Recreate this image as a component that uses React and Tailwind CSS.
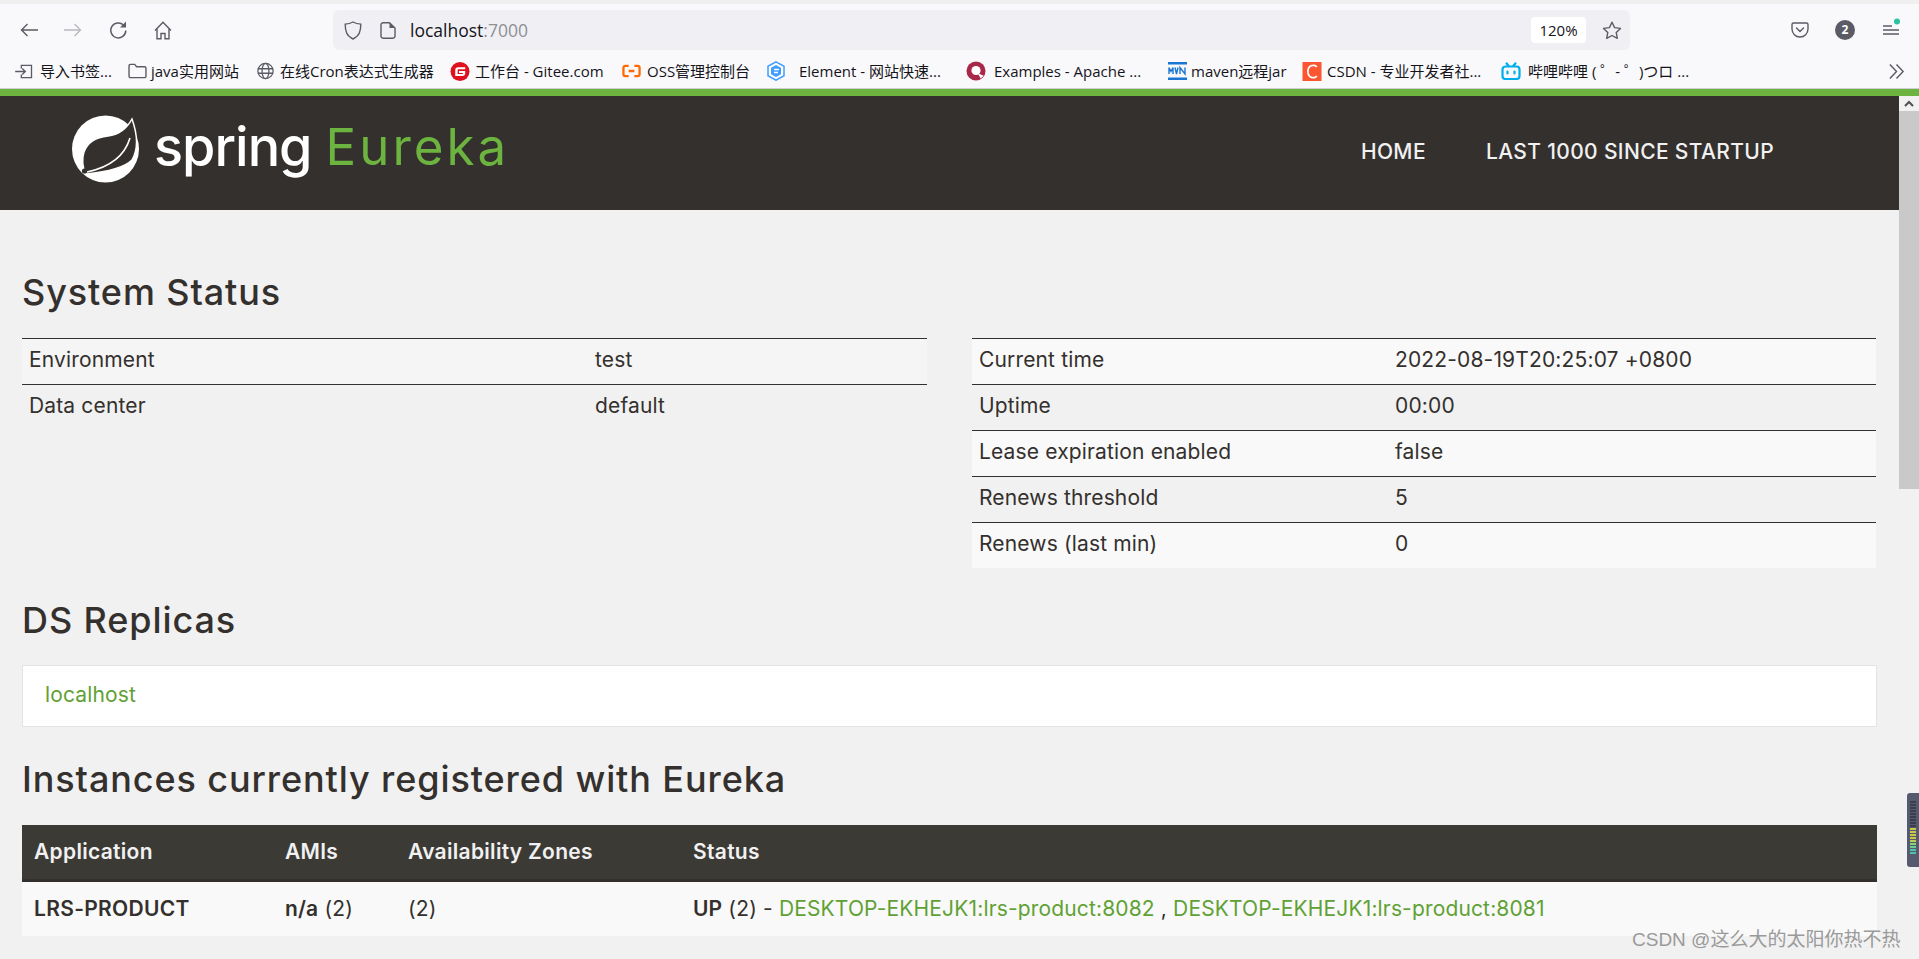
import React from 'react';

const ui = { fontFamily: '"Open Sans","Noto Sans CJK SC",sans-serif' };
const body = { fontFamily: '"Inter","Noto Sans",sans-serif' };

const Back = () => (
  <svg width="18" height="14" viewBox="0 0 18 14" fill="none" stroke="#5b5b66" strokeWidth="1.4"><path d="M18 7H1.500M7.500 1 1.500 7l6 6" /></svg>
);
const Forward = () => (
  <svg width="18" height="14" viewBox="0 0 18 14" fill="none" stroke="#b9b9bf" strokeWidth="1.4"><path d="M0 7h16.500M10.500 1l6 6-6 6" /></svg>
);
const Reload = () => (
  <svg width="18" height="18" viewBox="0 0 18 18" fill="none" stroke="#5b5b66" strokeWidth="1.5"><path d="M14.500 4A7.500 7.500 0 1 0 16.800 9.500" /><path d="M17 0.500v6h-6z" fill="#5b5b66" stroke="none" /></svg>
);
const Home = () => (
  <svg width="18" height="19" viewBox="0 0 18 19" fill="none" stroke="#5b5b66" strokeWidth="1.4"><path d="M1 9.500 9 1.200l8 8.300M3 8v9.800h4v-5.300h4v5.300h4V8" /></svg>
);
const Shield = () => (
  <svg width="18" height="19" viewBox="0 0 18 19" fill="none" stroke="#5b5b66" strokeWidth="1.4"><path d="M9 1c2.600 1.500 5 2 7.800 2.100 0 7-1.300 11.900-7.800 14.900C2.500 15 1.200 10.100 1.200 3.100 4 3 6.400 2.500 9 1z" /></svg>
);
const Doc = () => (
  <svg width="16" height="17" viewBox="0 0 16 17" fill="none" stroke="#5b5b66" strokeWidth="1.4"><path d="M3 .8h6.500L15 6v8.200a2 2 0 0 1-2 2H3a2 2 0 0 1-2-2V2.800a2 2 0 0 1 2-2z" /><path d="M9.500 .8V6H15z" fill="#5b5b66" stroke="none" /></svg>
);
const Star = () => (
  <svg width="20" height="19" viewBox="0 0 20 19" fill="none" stroke="#5b5b66" strokeWidth="1.4" strokeLinejoin="round"><path d="m10 1.200 2.600 5.400 5.900.8-4.300 4 1.100 5.900L10 14.500 4.700 17.300l1.100-5.900-4.300-4 5.900-.8z" /></svg>
);
const Pocket = () => (
  <svg width="18" height="16" viewBox="0 0 18 16" fill="none" stroke="#5b5b66" strokeWidth="1.4"><path d="M2.500 1h13A1.500 1.500 0 0 1 17 2.500V7A8 8 0 0 1 1 7V2.500A1.500 1.500 0 0 1 2.500 1z" /><path d="m5.500 6 3.500 3.500L12.500 6" strokeLinecap="round" /></svg>
);
const Menu = () => (
  <svg width="20" height="20" viewBox="0 0 20 20" fill="none" stroke="#5b5b66" strokeWidth="1.3"><path d="M1 8h9M1 12h16M1 16h16" /><circle cx="15" cy="3.500" r="3" fill="#2ac3a2" stroke="none" /></svg>
);
const Chevrons = () => (
  <svg width="17" height="17" viewBox="0 0 18 18" fill="none" stroke="#5b5b66" strokeWidth="1.500"><path d="m2 1.500 7 7.500-7 7.500M9 1.500l7 7.500-7 7.500" /></svg>
);

const IconImport = () => (
  <svg width="18" height="15" viewBox="0 0 20 17" fill="none" stroke="#5b5b66" strokeWidth="1.500"><path d="M7 5V1.500h11.500v14H7V12M0 8.500h11M8 5l3.500 3.500L8 12" /></svg>
);
const IconFolder = () => (
  <svg width="19" height="16" viewBox="0 0 20 17" fill="none" stroke="#5b5b66" strokeWidth="1.500"><path d="M1 3A1.500 1.500 0 0 1 2.500 1.500H7L9 4h8.500A1.500 1.500 0 0 1 19 5.500V14a1.500 1.500 0 0 1-1.500 1.500h-15A1.500 1.500 0 0 1 1 14z" /></svg>
);
const IconGlobe = () => (
  <svg width="19" height="18" viewBox="0 0 20 20" fill="none" stroke="#5b5b66" strokeWidth="1.400"><circle cx="10" cy="10" r="8.500" /><ellipse cx="10" cy="10" rx="3.800" ry="8.500" /><path d="M1.500 7.500h17M1.500 12.500h17" /></svg>
);
const IconGitee = () => (
  <svg width="20" height="19" viewBox="0 0 20 20"><circle cx="10" cy="10" r="10" fill="#e0101f" /><path d="M15.500 5.500H8A3 3 0 0 0 5 8.500v6.200h8a2.500 2.500 0 0 0 2.500-2.500V9.500H9v2h4v1H7.500V8.500A1 1 0 0 1 8.500 7.500h7z" fill="#fff" /></svg>
);
const IconOss = () => (
  <svg width="19" height="14" viewBox="0 0 20 14" fill="none" stroke="#ff6a00" strokeWidth="2.400"><path d="M7 1.500H3.500a2 2 0 0 0-2 2v7a2 2 0 0 0 2 2H7M13 1.500h3.500a2 2 0 0 1 2 2v7a2 2 0 0 1-2 2H13M7 7h6" /></svg>
);
const IconElement = () => (
  <svg width="18" height="20" viewBox="0 0 18 20"><path d="M9 .8 17 5.300v9.400l-8 4.500-8-4.500V5.300z" fill="#fff" stroke="#409eff" strokeWidth="1.500" /><path d="M9 4l5 2.800v6.400L9 16l-5-2.800V6.800z" fill="#409eff" /><path d="M7 8.500h5M7 11.500h4" stroke="#fff" strokeWidth="1.300" /></svg>
);
const IconExamples = () => (
  <svg width="21" height="20" viewBox="0 0 21 20"><circle cx="10.500" cy="10" r="10" fill="#a8284a" /><circle cx="10.500" cy="9.500" r="4.800" fill="#fff" /><path d="m12 12 3.500 6 3-3z" fill="#fff" /></svg>
);
const IconMvn = () => (
  <svg width="19" height="18" viewBox="0 0 19 18"><rect width="19" height="2.500" fill="#1976d2" /><rect y="15.500" width="19" height="2.500" fill="#1976d2" /><path d="M1 12V5.500l2 4 2-4V12M7 5.500 8.500 12 10 5.500M12 12V5.500l5 6.500V5.500" fill="none" stroke="#1976d2" strokeWidth="1.400" /></svg>
);
const IconCsdn = () => (
  <svg width="20" height="19" viewBox="0 0 20 20"><rect width="20" height="20" fill="#fc5531" /><path d="M15 5.500C14 3.500 11 3 9 4c-2.500 1.200-3.300 3.500-3.300 6s.8 4.800 3.300 6c2 1 5 .5 6-1.500" fill="none" stroke="#fff" strokeWidth="1.800" /></svg>
);
const IconBili = () => (
  <svg width="20" height="18" viewBox="0 0 20 18" fill="none" stroke="#00aeec" strokeWidth="2.200"><rect x="1.500" y="4.500" width="17" height="12.500" rx="3" /><path d="m5 .8 3 3.500M15 .8l-3 3.500" /><path d="M6.500 9.500v2M13.500 9.500v2" strokeLinecap="round" /></svg>
);

const Bookmark = ({ icon, text, ml, w, gap = 'gap-[6px]' }) => (
  <div className={`flex shrink-0 items-center ${gap} ${ml}`}>
    <span className="flex w-[20px] shrink-0 justify-center">{icon}</span>
    <span className={`whitespace-nowrap text-[15px] leading-[20px] text-[#15141a] ${w}`}>{text}</span>
  </div>
);

const SpringLeaf = () => (
  <svg width="80" height="80" viewBox="0 0 80 80">
    <circle cx="39.500" cy="41" r="33.500" fill="#fff" />
    <path d="M66 11C71 25 73 40 66 52 58 60 40 64 20 66 16 60 16 50 18 44 22 33 32 29 42 28 52 27 60 22 66 11z" fill="#34302d" stroke="#fff" strokeWidth="1.500" />
    <path d="M21 64C40 60 58 50 64 30" fill="none" stroke="#fff" strokeWidth="1.600" />
    <circle cx="18.500" cy="63" r="2.600" fill="#34302d" />
  </svg>
);

const Row = ({ a, b, odd }) => (
  <div className={`flex h-[46px] items-center border-t border-[#34302d] pb-[3px] text-[21px] tracking-[0.15px] text-[#34302d] ${odd ? 'bg-[#f5f5f5]' : ''}`}>
    <div className="w-[573px] pl-[7px]">{a}</div>
    <div>{b}</div>
  </div>
);
const RowR = ({ a, b, odd }) => (
  <div className={`flex h-[46px] items-center border-t border-[#34302d] pb-[3px] text-[21px] tracking-[0.15px] text-[#34302d] ${odd ? 'bg-[#f9f9f9]' : 'bg-[#f1f1f1]'}`}>
    <div className="w-[423px] pl-[7px]">{a}</div>
    <div>{b}</div>
  </div>
);

export default function App() {
  return (
    <div className="relative flex h-[959px] w-[1919px] flex-col overflow-hidden bg-[#f1f1f1]" style={ui}>
      {/* browser chrome */}
      <div className="h-[4px] bg-[#f0f0f0]"></div>
      <div className="flex h-[52px] items-center bg-[#f9f9fb]">
        <div className="ml-[20px]"><Back /></div>
        <div className="ml-[26px]"><Forward /></div>
        <div className="ml-[27px]"><Reload /></div>
        <div className="ml-[27px]"><Home /></div>
        <div className="ml-[161px] flex h-[40px] w-[1297px] items-center rounded-[6px] bg-[#f0f0f4]">
          <div className="ml-[11px]"><Shield /></div>
          <div className="ml-[18px]"><Doc /></div>
          <div className="ml-[14px] text-[17.500px] text-[#15141a]">localhost<span className="text-[#8f8f95]">:7000</span></div>
          <div className="ml-auto flex h-[26px] w-[55px] items-center justify-center rounded-[4px] bg-white text-[15px] text-[#15141a]">120%</div>
          <div className="ml-[16px] mr-[8px]"><Star /></div>
        </div>
        <div className="ml-[161px]"><Pocket /></div>
        <div className="ml-[26px] flex h-[20px] w-[20px] items-center justify-center rounded-full bg-[#5b5b66] text-[12px] font-bold text-white">2</div>
        <div className="ml-[27px] mb-[4px]"><Menu /></div>
      </div>
      <div className="flex h-[33px] items-center border-b border-[#d0d0d4] bg-[#f9f9fb] pb-[2px]">
        <Bookmark ml="ml-[14px]" icon={<IconImport />} text="导入书签..." w="w-[76px]" />
        <Bookmark ml="ml-[11px]" icon={<IconFolder />} text="java实用网站" w="w-[92px]" gap="gap-[4px]" />
        <Bookmark ml="ml-[12px]" icon={<IconGlobe />} text="在线Cron表达式生成器" w="w-[158px]" gap="gap-[5px]" />
        <Bookmark ml="ml-[12px]" icon={<IconGitee />} text="工作台 - Gitee.com" w="w-[134px]" gap="gap-[5px]" />
        <Bookmark ml="ml-[12px]" icon={<IconOss />} text="OSS管理控制台" w="w-[105px]" />
        <Bookmark ml="ml-[14px]" icon={<IconElement />} text="Element - 网站快速..." w="w-[147px]" gap="gap-[13px]" />
        <Bookmark ml="ml-[20px]" icon={<IconExamples />} text="Examples - Apache ..." w="w-[155px]" gap="gap-[8px]" />
        <Bookmark ml="ml-[18px]" icon={<IconMvn />} text="maven远程jar" w="w-[98px]" gap="gap-[4px]" />
        <Bookmark ml="ml-[13px]" icon={<IconCsdn />} text="CSDN - 专业开发者社..." w="w-[160px]" gap="gap-[5px]" />
        <Bookmark ml="ml-[14px]" icon={<IconBili />} text="哔哩哔哩 ( ゜- ゜)つロ ..." w="w-[160px]" gap="gap-[7px]" />
        <div className="ml-auto mr-[14px]"><Chevrons /></div>
      </div>
      <div className="h-[7px] bg-[#6db33f]"></div>

      {/* page + scrollbar */}
      <div className="flex min-h-0 flex-1">
        <div className="min-w-0 flex-1 overflow-hidden" style={body}>
          <header className="flex h-[114px] bg-[#34302d] pt-[12px]">
            <div className="ml-[66px]"><SpringLeaf /></div>
            <div className="ml-[8px] mt-[6px] text-[54px] font-medium leading-[66px] tracking-[-1px] text-white">spring</div>
            <div className="ml-[14px] mt-[6px] text-[51px] leading-[66px] tracking-[3px] text-[#6db33f]">Eureka</div>
            <nav className="ml-auto mr-[125px] mt-[30px] flex gap-[60px] text-[21px] font-medium leading-[28px] tracking-[0.35px] text-[#f1f1f1]">
              <span>HOME</span>
              <span>LAST 1000 SINCE STARTUP</span>
            </nav>
          </header>

          <main className="px-[22px]">
            <h1 className="mt-[60px] text-[36px] font-medium leading-[44px] tracking-[0.9px] text-[#34302d]">System Status</h1>
            <div className="mt-[24px] flex gap-[45px]">
              <div className="w-[905px]">
                <Row a="Environment" b="test" odd />
                <Row a="Data center" b="default" />
              </div>
              <div className="w-[904px]">
                <RowR a="Current time" b="2022-08-19T20:25:07 +0800" odd />
                <RowR a="Uptime" b="00:00" />
                <RowR a="Lease expiration enabled" b="false" odd />
                <RowR a="Renews threshold" b="5" />
                <RowR a="Renews (last min)" b="0" odd />
              </div>
            </div>

            <h1 className="mt-[30px] text-[36px] font-medium leading-[44px] tracking-[0.9px] text-[#34302d]">DS Replicas</h1>
            <div className="mt-[23px] flex h-[62px] items-center border border-[#e3e3e3] bg-white pb-[2px] pl-[22px] text-[21px] tracking-[0.15px] text-[#5fa134]">localhost</div>

            <h1 className="mt-[30px] text-[36px] font-medium leading-[44px] tracking-[0.9px] text-[#34302d]">Instances currently registered with Eureka</h1>
            <div className="mt-[24px]">
              <div className="flex h-[57px] items-center border-b-[3px] border-[#34302d] bg-[#3c3a35] pb-[1px] text-[21px] font-semibold tracking-[0.3px] text-[#f1f1f1]">
                <div className="w-[263px] pl-[12px]">Application</div>
                <div className="w-[123px]">AMIs</div>
                <div className="w-[285px]">Availability Zones</div>
                <div>Status</div>
              </div>
              <div className="flex h-[54px] items-center bg-[#f9f9f9] pb-[1px] text-[21px] tracking-[0.15px] text-[#34302d]">
                <div className="w-[263px] pl-[12px] font-semibold tracking-[0.3px]">LRS-PRODUCT</div>
                <div className="w-[123px]"><b className="font-semibold">n/a</b> (2)</div>
                <div className="w-[285px]">(2)</div>
                <div><b className="font-semibold">UP</b> (2) - <span className="text-[#5fa134]">DESKTOP-EKHEJK1:lrs-product:8082</span> , <span className="text-[#5fa134]">DESKTOP-EKHEJK1:lrs-product:8081</span></div>
              </div>
            </div>
          </main>
        </div>

        {/* scrollbar */}
        <div className="flex w-[20px] shrink-0 flex-col bg-[#f1f1f1]">
          <div className="flex h-[15px] items-center justify-center bg-[#f1f1f1]">
            <svg width="10" height="7" viewBox="0 0 10 7" fill="none" stroke="#505050" strokeWidth="2"><path d="m1 6 4-4 4 4" /></svg>
          </div>
          <div className="h-[378px] bg-[#c9c9c9]"></div>
        </div>
      </div>

      {/* overlays */}
      <div className="absolute left-[1907px] top-[793px] flex h-[74px] w-[12px] flex-col items-center gap-[1px] rounded-l-[3px] bg-[#565a6e] pt-[8px]">
        {['#3a3d4a','#3a3d4a','#3a3d4a','#3a3d4a','#3a3d4a','#3a3d4a','#3a3d4a','#3a3d4a','#3a3d4a','#c9c94a','#c9c94a','#c9c94a','#c9c94a','#b8d05a','#8ecf7a','#6acb94','#4fc4a4','#4fc4a4'].map((c, i) => (
          <div key={i} className="h-[2px] w-[6px]" style={{ background: c }}></div>
        ))}
      </div>
      <div className="absolute left-[1632px] top-[927px] whitespace-nowrap text-[19px] leading-[26px] text-[#9a9a9a]" style={{ fontFamily: '"Liberation Sans","Noto Sans CJK SC",sans-serif' }}>CSDN @这么大的太阳你热不热</div>
    </div>
  );
}
